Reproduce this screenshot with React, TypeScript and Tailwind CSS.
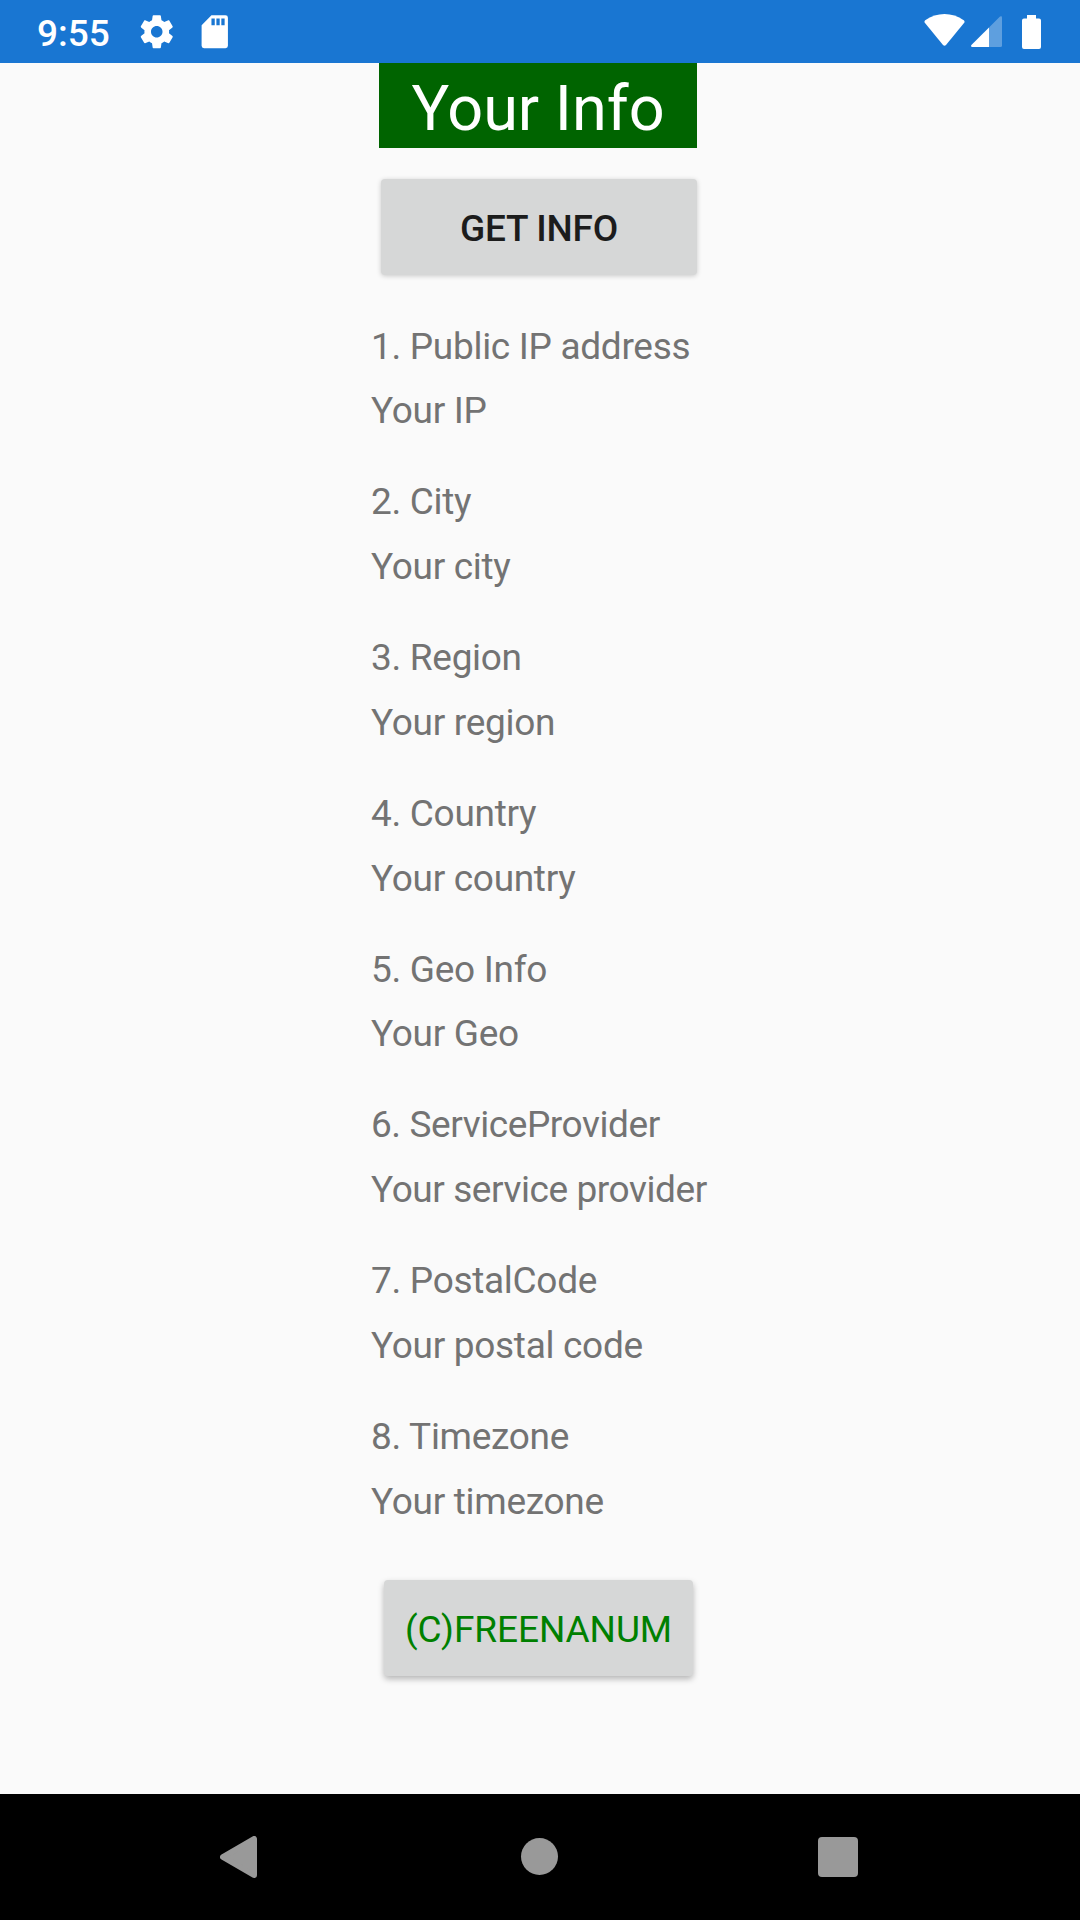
const items = [
  ["1. Public IP address", "Your IP"],
  ["2. City", "Your city"],
  ["3. Region", "Your region"],
  ["4. Country", "Your country"],
  ["5. Geo Info", "Your Geo"],
  ["6. ServiceProvider", "Your service provider"],
  ["7. PostalCode", "Your postal code"],
  ["8. Timezone", "Your timezone"],
];

const tracking = (text: string) =>
  /provider/i.test(text) ? "tracking-[-0.42px]" : "tracking-[-0.3px]";

export default function App() {
  return (
    <div className="flex h-[1920px] w-[1080px] flex-col overflow-hidden bg-[#fafafa] font-['Roboto',sans-serif]">
      <header className="flex h-[63px] shrink-0 items-center bg-[#1976d2] pl-[37px] pr-[39px] text-white">
        <span className="mt-[5px] w-[72px] text-[37px] font-medium leading-[44px]">9:55</span>
        <svg className="ml-[28px] size-[39.5px]" viewBox="0 0 24 24" fill="currentColor">
          <path d="M19.43 12.98c.04-.32.07-.64.07-.98s-.03-.66-.07-.98l2.11-1.65c.19-.15.24-.42.12-.64l-2-3.46c-.12-.22-.39-.3-.61-.22l-2.49 1c-.52-.4-1.08-.73-1.69-.98l-.38-2.65C14.46 2.18 14.25 2 14 2h-4c-.25 0-.46.18-.49.42l-.38 2.65c-.61.25-1.17.59-1.69.98l-2.49-1c-.23-.09-.49 0-.61.22l-2 3.46c-.13.22-.07.49.12.64l2.11 1.65c-.04.32-.07.65-.07.98s.03.66.07.98l-2.11 1.65c-.19.15-.24.42-.12.64l2 3.46c.12.22.39.3.61.22l2.49-1c.52.4 1.08.73 1.69.98l.38 2.65c.03.24.24.42.49.42h4c.25 0 .46-.18.49-.42l.38-2.65c.61-.25 1.17-.59 1.69-.98l2.49 1c.23.09.49 0 .61-.22l2-3.46c.12-.22.07-.49-.12-.64l-2.11-1.65zM12 15.5c-1.93 0-3.500-1.570-3.500-3.500s1.570-3.500 3.500-3.500 3.500 1.570 3.500 3.500-1.570 3.500-3.500 3.500z" />
        </svg>
        <svg className="ml-[18.5px] mr-[0.5px] size-[39.5px]" viewBox="0 0 24 24" fill="currentColor">
          <path d="M18.500 2H10L4.020 8 4 20.500Q4 22 5.500 22h13q1.500 0 1.500-1.500v-17Q20 2 18.500 2M12 8h-2V4h2zm3 0h-2V4h2zm3 0h-2V4h2z" />
        </svg>
        <svg className="mb-[3px] ml-auto h-[32px] w-[41px]" viewBox="0 0 41 32" fill="currentColor">
          <path d="M1.200 6.300C13-2 28-2 39.800 6.300Q41.200 7.500 40 9L22 31Q20.500 32.500 19 31L1 9Q-.2 7.500 1.200 6.300Z" />
        </svg>
        <svg className="ml-[6px] size-[31px]" viewBox="0 0 31 31" fill="currentColor">
          <path opacity=".3" d="M18 11.500 29 .6Q31-.6 31 1.500V29.500Q31 31 29.500 31H18Z" />
          <path d="M18 11.500V31H1.200Q-.6 30.500.4 29Z" />
        </svg>
        <svg className="ml-[20px] h-[34px] w-[19px]" viewBox="0 0 19 34" fill="currentColor">
          <path d="M5 0h9v3.500h3q2 0 2 2V32q0 2-2 2H2q-2 0-2-2V5.500q0-2 2-2h3Z" />
        </svg>
      </header>
      <main className="flex flex-1 flex-col">
        <h1 className="ml-[379px] h-[85px] w-[318px] bg-[#006400] text-center text-[63px] leading-[92px] text-white">Your Info</h1>
        <button className="ml-[381px] mt-[31px] h-[96px] w-[316px] rounded-[4px] bg-[#d6d7d7] pt-[3px] text-[37px] font-medium tracking-[-0.25px] text-[#1c1c1c] shadow-[0_1px_5px_rgba(0,0,0,0.2)]">GET INFO</button>
        <dl className="ml-[371px] mt-[39px] text-[37px] text-[#737373]">
          {items.map(([title, value], i) => (
            <div key={title} className={i % 4 === 0 ? "h-[155px]" : "h-[156px]"}>
              <dt className={`leading-[65px] ${tracking(title)}`}>{title}</dt>
              <dd className={`${i % 4 === 0 ? "leading-[63px]" : "leading-[65px]"} ${tracking(value)}`}>{value}</dd>
            </div>
          ))}
        </dl>
        <button className="ml-[384px] mt-[20px] h-[96px] w-[309px] rounded-[4px] bg-[#d6d7d7] pt-[3px] text-[37px] tracking-[-0.08px] text-[#008000] shadow-[0_3px_6px_rgba(0,0,0,0.28)]">(C)FREENANUM</button>
      </main>
      <nav className="flex h-[126px] shrink-0 items-center bg-black pl-[220px] text-[#999]">
        <svg className="h-[42px] w-[37px]" viewBox="0 0 37 42" fill="currentColor" stroke="currentColor" strokeWidth="6" strokeLinejoin="round"><path d="M3 21 34 3V39Z" /></svg>
        <span className="mb-px ml-[264px] size-[37px] rounded-full bg-[#999]" />
        <span className="ml-[260px] size-[40px] rounded-[4px] bg-[#999]" />
      </nav>
    </div>
  );
}
